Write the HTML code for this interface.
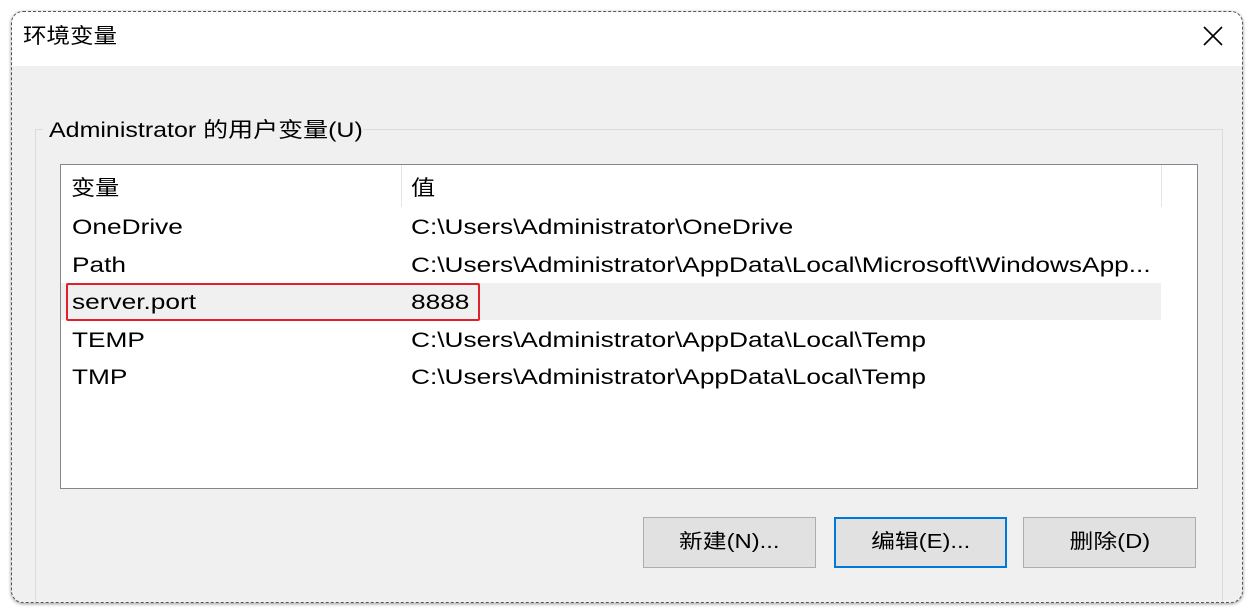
<!DOCTYPE html>
<html><head><meta charset="utf-8"><style>
body{margin:0;width:1252px;height:613px;background:#fff;position:relative;overflow:hidden;font-family:"Liberation Sans","Noto Sans CJK SC",sans-serif;color:#000}
.win{position:absolute;left:11px;top:11px;width:1230px;height:590px;border:1px dashed #555;border-radius:12px;background:#f0f0f0;overflow:hidden;box-shadow:0 1px 3px rgba(0,0,0,.4)}
.title{position:absolute;left:0;top:0;right:0;height:54px;background:#fff}
.t{position:absolute;font-size:21px;line-height:24px;white-space:nowrap;transform:scaleX(1.19);transform-origin:0 0}
.list .t{transform:scaleX(1.25)}
.grp{position:absolute;left:23px;top:117px;width:1186px;height:480px;border:1px solid #dcdcdc}
.list{position:absolute;left:48px;top:152px;width:1136px;height:323px;border:1px solid #828790;background:#fff}
.btn{position:absolute;top:505px;width:173px;height:51px;border:1px solid #adadad;background:#e1e1e1;font-size:20px;text-align:center;line-height:49px;box-sizing:border-box}
.btn span{display:inline-block;transform:scaleX(1.19)}
</style></head><body>
<div class="win">
<div class="title"></div>
<div class="t" style="left:11px;top:13px;transform:scaleX(1.12)">环境变量</div>
<svg style="position:absolute;left:1191px;top:14px" width="20" height="20"><path d="M1 1L19 19M19 1L1 19" stroke="#000" stroke-width="1.6"/></svg>
<div class="grp"></div>
<div style="position:absolute;left:31px;top:106px;width:320px;height:24px;background:#f0f0f0"></div>
<div class="t" style="left:37px;top:107px">Administrator 的用户变量(U)</div>
<div class="list">
<div style="position:absolute;left:340px;top:0;width:1px;height:42px;background:#e5e5e5"></div>
<div style="position:absolute;left:1100px;top:0;width:1px;height:42px;background:#e5e5e5"></div>
<div style="position:absolute;left:0;top:118px;width:1100px;height:37px;background:#f0f0f0"></div>
<div style="position:absolute;left:5px;top:118px;width:410px;height:34px;border:2px solid #e0202a;border-radius:2px"></div>
<div class="t" style="left:10px;top:12px;transform:scaleX(1.15)">变量</div><div class="t" style="left:350px;top:12px;transform:scaleX(1.15)">值</div>
<div class="t" style="left:11px;top:51px">OneDrive</div><div class="t" style="left:350px;top:51px">C:\Users\Administrator\OneDrive</div>
<div class="t" style="left:11px;top:89px">Path</div><div class="t" style="left:350px;top:89px">C:\Users\Administrator\AppData\Local\Microsoft\WindowsApp...</div>
<div class="t" style="left:11px;top:126px">server.port</div><div class="t" style="left:350px;top:126px">8888</div>
<div class="t" style="left:11px;top:164px">TEMP</div><div class="t" style="left:350px;top:164px">C:\Users\Administrator\AppData\Local\Temp</div>
<div class="t" style="left:11px;top:201px">TMP</div><div class="t" style="left:350px;top:201px">C:\Users\Administrator\AppData\Local\Temp</div>
</div>
<div class="btn" style="left:631px"><span>新建(N)...</span></div>
<div class="btn" style="left:822px;border:2px solid #0078d7;line-height:47px"><span>编辑(E)...</span></div>
<div class="btn" style="left:1011px"><span>删除(D)</span></div>
</div>
</body></html>
